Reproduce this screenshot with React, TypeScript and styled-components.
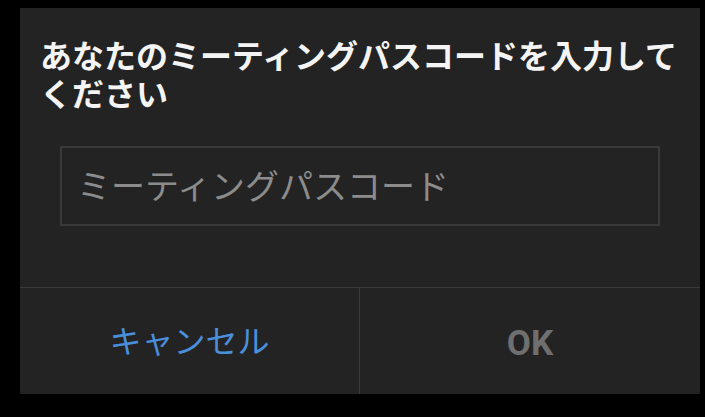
import React from "react";
import styled, { createGlobalStyle } from "styled-components";

const GlobalStyle = createGlobalStyle`
  html, body {
    margin: 0;
    padding: 0;
    background: #000;
  }
  body {
    font-family: "Roboto", "Noto Sans CJK JP", sans-serif;
  }
`;

const Page = styled.div`
  width: 705px;
  height: 417px;
  background: #000;
  padding: 8px 5px 0 20px;
  box-sizing: border-box;
`;

const Dialog = styled.div`
  width: 680px;
  height: 386px;
  background: #232323;
  display: flex;
  flex-direction: column;
`;

const Title = styled.h2`
  margin: 0;
  padding: 27px 14px 0 20px;
  font-family: "Noto Sans CJK JP", sans-serif;
  font-weight: 700;
  font-size: 32px;
  line-height: 38px;
  color: #f4f4f4;
`;

const Body = styled.div`
  padding: 35px 40px 0 40px;
  height: 176px;
  box-sizing: border-box;
`;

const PassInput = styled.input`
  display: block;
  width: 100%;
  height: 80px;
  box-sizing: border-box;
  background: transparent;
  border: 2px solid #393939;
  padding: 0 0 4px 15px;
  font-family: "Noto Sans CJK JP", sans-serif;
  font-size: 34px;
  color: #eee;
  outline: none;
  &::placeholder {
    color: #8c8c8c;
  }
`;

const ButtonRow = styled.div`
  flex: 1;
  display: grid;
  grid-template-columns: 339px 1fr;
  border-top: 1px solid #3a3a3a;
`;

const DialogButton = styled.button<{ $tone: "cancel" | "ok" }>`
  background: transparent;
  border: none;
  border-left: ${(p) => (p.$tone === "ok" ? "1px solid #3a3a3a" : "none")};
  display: flex;
  align-items: center;
  justify-content: center;
  padding: ${(p) => (p.$tone === "ok" ? "4px 0 0 0" : "0 0 4px 0")};
  font-family: ${(p) =>
    p.$tone === "ok" ? `"Roboto", sans-serif` : `"Noto Sans CJK JP", sans-serif`};
  font-weight: ${(p) => (p.$tone === "ok" ? 700 : 400)};
  font-size: ${(p) => (p.$tone === "ok" ? "35px" : "32px")};
  color: ${(p) => (p.$tone === "ok" ? "#6f6f6f" : "#4a8fdb")};
  cursor: pointer;
`;

export default function App() {
  return (
    <>
      <GlobalStyle />
      <Page>
        <Dialog>
          <Title>あなたのミーティングパスコードを入力してください</Title>
          <Body>
            <PassInput placeholder="ミーティングパスコード" />
          </Body>
          <ButtonRow>
            <DialogButton $tone="cancel">キャンセル</DialogButton>
            <DialogButton $tone="ok">OK</DialogButton>
          </ButtonRow>
        </Dialog>
      </Page>
    </>
  );
}
